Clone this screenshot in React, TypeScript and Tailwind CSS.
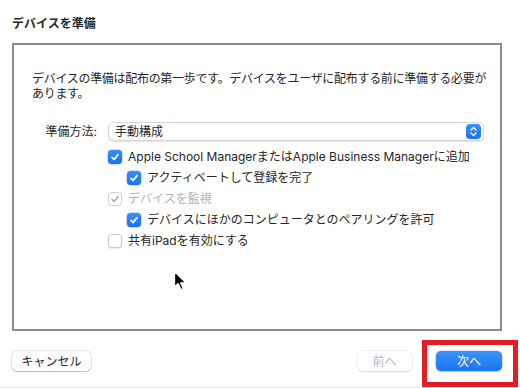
import React from "react";

function CheckMark({ color = "#ffffff" }: { color?: string }) {
  return (
    <svg width="10" height="10" viewBox="0 0 10 10" fill="none">
      <path d="M2 5.3 L4.1 7.5 L8 2.6" stroke={color} strokeWidth="1.7" strokeLinecap="round" strokeLinejoin="round" />
    </svg>
  );
}

function Checkbox({ checked, disabled }: { checked: boolean; disabled?: boolean }) {
  if (disabled) {
    return (
      <span className="w-[14px] h-[14px] rounded-[3.5px] border border-[#cfcfcf] bg-white flex items-center justify-center shrink-0">
        <CheckMark color="#b4b4b4" />
      </span>
    );
  }
  if (checked) {
    return (
      <span className="w-[14px] h-[14px] rounded-[3.5px] bg-gradient-to-b from-[#3a8ffa] to-[#1672f0] flex items-center justify-center shrink-0 shadow-[0_0_0_0.5px_rgba(0,60,160,0.35)]">
        <CheckMark />
      </span>
    );
  }
  return (
    <span className="w-[14px] h-[14px] rounded-[3.5px] border border-[#c4c4c4] bg-white shrink-0 shadow-[0_1px_1px_rgba(0,0,0,0.08)]" />
  );
}

function Row({ label, checked, disabled, indent }: { label: string; checked: boolean; disabled?: boolean; indent?: boolean }) {
  return (
    <div className={`flex items-center h-[21px] gap-[6px] ${indent ? "ml-[19px]" : ""}`}>
      <Checkbox checked={checked} disabled={disabled} />
      <span className={disabled ? "text-[#b3b3b3]" : "text-[#262626]"}>{label}</span>
    </div>
  );
}

export default function App() {
  return (
    <div className="w-[520px] h-[388px] bg-white relative overflow-hidden border-b border-[#e8e8e8] text-[12px] leading-[15px] text-[#262626] font-['Inter','Noto_Sans_CJK_JP',sans-serif]">
      {/* title */}
      <div className="h-[43px] pt-[16px] pl-[12px] font-bold leading-[16px]">デバイスを準備</div>

      {/* content panel */}
      <div className="ml-[12px] w-[490px] h-[288px] border-2 border-[#8c8c8c]">
        <p className="mt-[26px] ml-[18px] w-[462px] tracking-[-0.3px]">
          デバイスの準備は配布の第一歩です。デバイスをユーザに配布する前に準備する必要があります。
        </p>

        <div className="flex items-center mt-[21px]">
          <span className="w-[83px] text-right">準備方法:</span>
          <div className="ml-[11px] w-[376px] h-[19px] rounded-[5px] bg-white border border-[#d6d6d6] shadow-[0_1px_1px_rgba(0,0,0,0.1)] flex items-center justify-between pl-[6px] pr-[2px]">
            <span>手動構成</span>
            <span className="w-[15px] h-[15px] rounded-[4px] bg-gradient-to-b from-[#3a8ffa] to-[#1672f0] flex items-center justify-center">
              <svg width="9" height="11" viewBox="0 0 9 11" fill="none">
                <path d="M2 4 L4.5 1.6 L7 4" stroke="#fff" strokeWidth="1.4" strokeLinecap="round" strokeLinejoin="round" />
                <path d="M2 7 L4.5 9.4 L7 7" stroke="#fff" strokeWidth="1.4" strokeLinecap="round" strokeLinejoin="round" />
              </svg>
            </span>
          </div>
        </div>

        <div className="ml-[94px] mt-[5px] flex flex-col">
          <Row label="Apple School ManagerまたはApple Business Managerに追加" checked />
          <Row label="アクティベートして登録を完了" checked indent />
          <Row label="デバイスを監視" checked disabled />
          <Row label="デバイスにほかのコンピュータとのペアリングを許可" checked indent />
          <Row label="共有iPadを有効にする" checked={false} />
        </div>
      </div>

      {/* footer */}
      <div className="flex items-center mt-[20px] pl-[12px] pr-[18px]">
        <button className="w-[79px] h-[20px] rounded-[5px] bg-white shadow-[0_0_0_0.5px_rgba(0,0,0,0.18),0_1px_1.5px_rgba(0,0,0,0.18)] text-[#262626]">
          キャンセル
        </button>
        <div className="ml-auto flex items-center gap-[24px]">
          <button className="w-[55px] h-[20px] rounded-[5px] bg-white shadow-[0_0_0_0.5px_rgba(0,0,0,0.1),0_1px_1.5px_rgba(0,0,0,0.1)] text-[#b8b8b8]">
            前へ
          </button>
          <button className="w-[66px] h-[20px] rounded-[5px] bg-gradient-to-b from-[#3a94fb] to-[#1874f1] text-white shadow-[0_0_0_0.5px_rgba(0,70,180,0.3),0_1px_1.5px_rgba(0,0,0,0.15)]">
            次へ
          </button>
        </div>
      </div>

      {/* red annotation box */}
      <div className="absolute left-[422px] top-[340px] w-[96px] h-[47px] border-[5px] border-[#e41c23]" />

      {/* mouse cursor */}
      <svg className="absolute left-[173px] top-[270px]" width="15" height="22" viewBox="0 0 15 22">
        <path d="M1.5 1.5 L1.5 17 L5.2 13.6 L7.8 19.6 L10.2 18.6 L7.7 12.8 L12.6 12.6 Z" fill="#000" stroke="#fff" strokeWidth="1.3" strokeLinejoin="round" />
      </svg>
    </div>
  );
}
